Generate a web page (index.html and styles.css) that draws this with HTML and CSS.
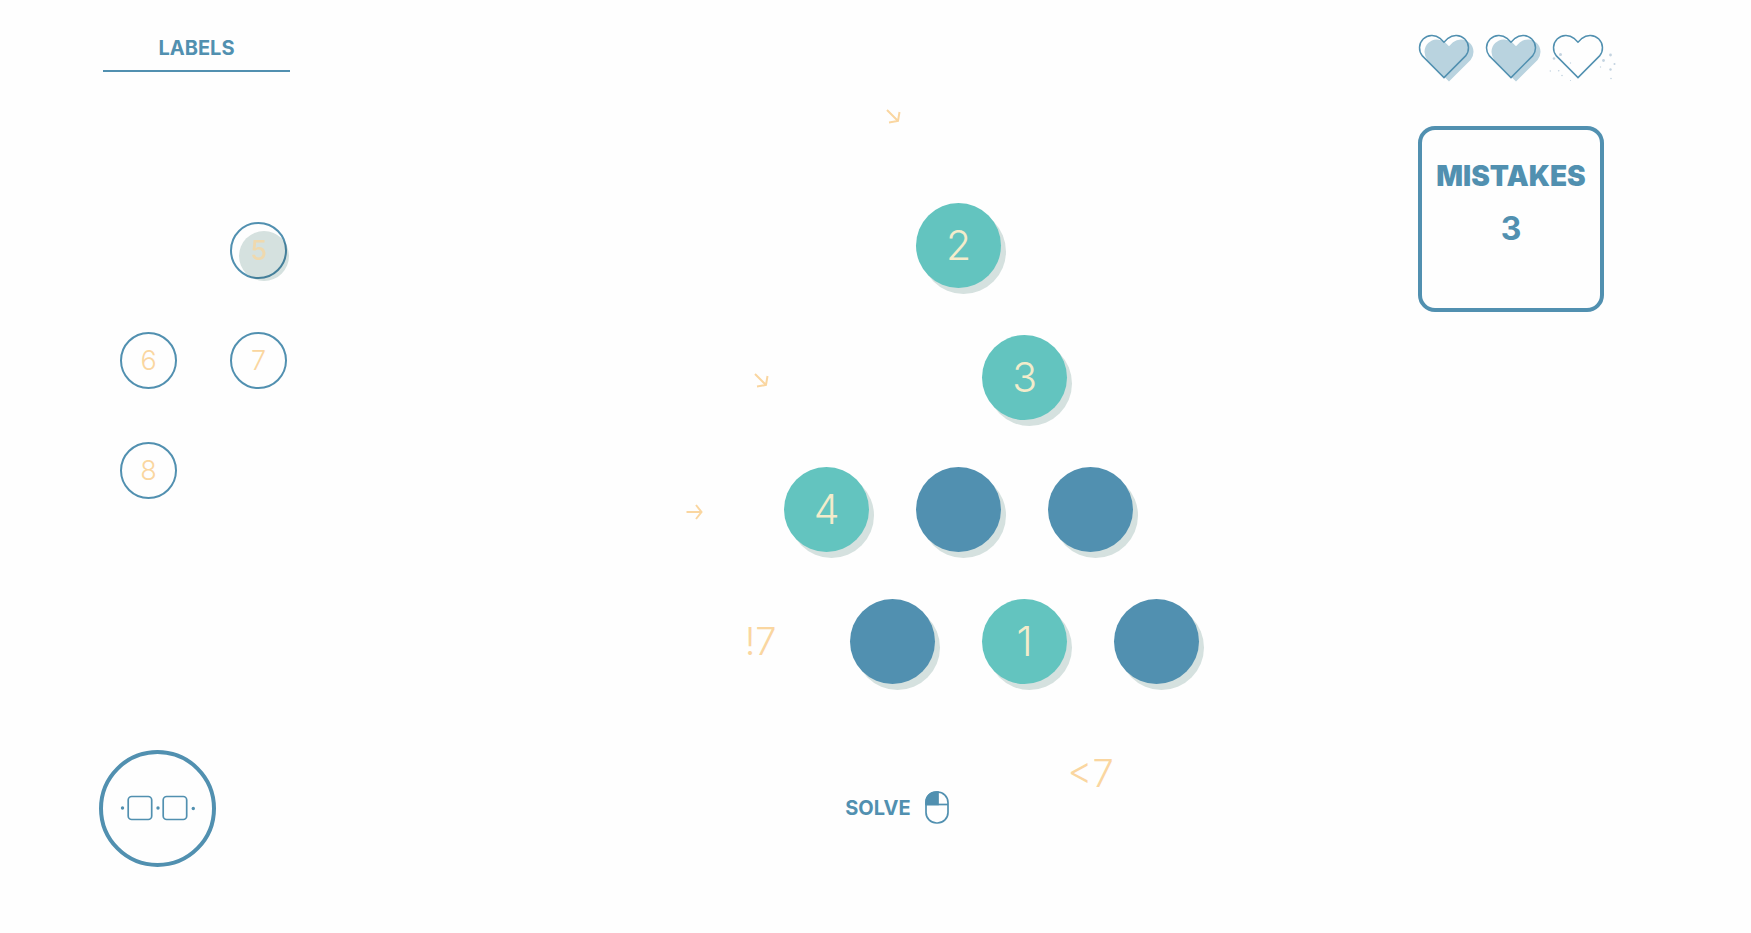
FILE: index.html
```html
<!DOCTYPE html>
<html lang="en">
<head>
<meta charset="utf-8">
<title>Labels puzzle</title>
<meta name="viewport" content="width=device-width, initial-scale=1">
<link rel="stylesheet" href="styles.css">
</head>
<body>
<svg class="defs" aria-hidden="true">
  <symbol id="heart" viewBox="0 0 60 52">
    <path d="M27 10.300L23 6.300A12.500 12.500 0 0 0 5.400 23.900L27 45.600L48.600 23.900A12.500 12.500 0 0 0 31 6.300Z"/>
  </symbol>
</svg>
<main class="game">
  <aside class="side">
    <h1 class="tab">LABELS</h1>
    <div class="labels">
      <button class="label label-active col-2" type="button">5</button>
      <button class="label" type="button">6</button>
      <button class="label" type="button">7</button>
      <button class="label" type="button">8</button>
    </div>
    <button class="tool" type="button" aria-label="Show links">
      <svg width="72" height="28" viewBox="0 0 72 28" fill="none" stroke="currentColor" stroke-width="1.700">
        <rect x="6.200" y="1.500" width="23.500" height="23" rx="3.500"/>
        <rect x="41.200" y="1.500" width="23.500" height="23" rx="3.500"/>
        <g fill="currentColor" stroke="none"><circle cx="0.500" cy="13" r="1.700"/><circle cx="36" cy="13" r="1.700"/><circle cx="71.300" cy="13.500" r="1.700"/></g>
      </svg>
    </button>
  </aside>

  <section class="board" aria-label="Board">
    <span class="hint r1 c4"><svg class="arrow" viewBox="0 0 18 18"><path d="M3 3L14 14M15.500 5L14 14L5 15.500"/></svg></span>
    <button class="node node-set r2 c5" type="button">2</button>
    <span class="hint r3 c2"><svg class="arrow" viewBox="0 0 18 18"><path d="M3 3L14 14M15.500 5L14 14L5 15.500"/></svg></span>
    <button class="node node-set r3 c6" type="button">3</button>
    <span class="hint r4 c1"><svg class="arrow" viewBox="0 0 18 18"><path d="M0.500 9H15.500M10 2L15.500 9L10 16"/></svg></span>
    <button class="node node-set r4 c3" type="button">4</button>
    <button class="node r4 c5" type="button" aria-label="Empty node"></button>
    <button class="node r4 c7" type="button" aria-label="Empty node"></button>
    <span class="hint r5 c2">!7</span>
    <button class="node r5 c4" type="button" aria-label="Empty node"></button>
    <button class="node node-set r5 c6" type="button">1</button>
    <button class="node r5 c8" type="button" aria-label="Empty node"></button>
    <span class="hint r6 c7">&lt;7</span>
    <button class="solve r6 c4" type="button">
      SOLVE
      <svg width="24" height="33" viewBox="0 0 24 33" fill="none" stroke="currentColor" stroke-width="1.700">
        <path d="M13 1H11C5.500 1 1 5.500 1 11V13.500H13Z" fill="currentColor"/>
        <rect x="1" y="1" width="22" height="31" rx="10.500"/>
        <path d="M1 13.500H23"/>
      </svg>
    </button>
  </section>

  <aside class="status">
    <div class="lives" role="img" aria-label="2 of 3 lives left">
      <svg class="life" viewBox="0 0 60 52"><use class="life-fill" href="#heart" x="5" y="4" width="60" height="52"/><use class="life-line" href="#heart" width="60" height="52"/></svg>
      <svg class="life" viewBox="0 0 60 52"><use class="life-fill" href="#heart" x="5" y="4" width="60" height="52"/><use class="life-line" href="#heart" width="60" height="52"/></svg>
      <svg class="life" viewBox="0 0 60 52"><use class="life-line" href="#heart" width="60" height="52"/>
        <g class="dust">
          <circle cx="3" cy="26.500" r="1.300"/><circle cx="9.500" cy="22.500" r="1.500"/><circle cx="52.500" cy="28.500" r="1.400"/><circle cx="59.500" cy="23" r="1.400"/><circle cx="63.500" cy="32" r="1"/><circle cx="59.500" cy="37.500" r="1.200"/>
          <circle cx="19.500" cy="31" r=".7"/><circle cx="-0.700" cy="39" r=".7"/><circle cx="7.700" cy="38.700" r=".8"/><circle cx="11" cy="43.500" r=".8"/><circle cx="19.500" cy="48.500" r=".6"/><circle cx="49.500" cy="35" r=".7"/><circle cx="60" cy="46.500" r=".8"/>
        </g>
      </svg>
    </div>
    <div class="card">
      <h2 class="card-title">MISTAKES</h2>
      <p class="card-value">3</p>
    </div>
  </aside>
</main>
</body>
</html>
```
FILE: styles.css
```css
:root {
  --blue: #5190b0;
  --teal: #63c4bf;
  --shade: #d5e1df;
  --sand: #fad6a0;
}

* { box-sizing: border-box; }

body {
  margin: 0;
  background: #fefefe;
  color: var(--blue);
  font-family: Inter, "Open Sans", sans-serif;
}

h1, h2, p { margin: 0; }

button {
  padding: 0;
  border: 0;
  background: none;
  color: inherit;
  font: inherit;
  cursor: pointer;
}

.defs {
  position: absolute;
  width: 0;
  height: 0;
}

.game {
  display: grid;
  grid-template-columns: 191px 338fr 594px 194fr 200px;
  min-height: 100vh;
  padding: 0 134px 0 99px;
}

.side {
  display: flex;
  flex-direction: column;
  padding: 33px 0 66px;
}

.tab {
  margin-left: 4px;
  padding-bottom: 7px;
  border-bottom: 2px solid var(--blue);
  font-size: 20px;
  font-weight: 700;
  line-height: 30px;
  text-align: center;
}

.labels {
  display: grid;
  grid-template-columns: 57px 57px;
  gap: 53px;
  margin: 150px 0 0 21px;
}

.label {
  position: relative;
  z-index: 0;
  height: 57px;
  border: 2px solid var(--blue);
  border-radius: 50%;
  color: var(--sand);
  font-size: 27px;
  font-weight: 300;
  line-height: 53px;
}

.label-active {
  color: #efd9ae;
  font-weight: 500;
}

.label-active::before {
  content: "";
  position: absolute;
  z-index: -1;
  inset: 7px -4px -4px 7px;
  border-radius: 50%;
  background: var(--shade);
  mix-blend-mode: multiply;
}

.col-2 { grid-column: 2; }

.tool {
  display: flex;
  align-items: center;
  justify-content: center;
  width: 117px;
  height: 117px;
  margin-top: auto;
  border: 4px solid var(--blue);
  border-radius: 50%;
}

.tool svg { overflow: visible; }

/* Staggered board: every cell spans two half-width columns. */
.board {
  grid-column: 3;
  display: grid;
  grid-template-columns: repeat(9, 66px);
  grid-template-rows: repeat(6, 132px);
  place-items: center;
  padding-top: 47px;
}

.c1 { grid-column: 1 / span 2; }
.c2 { grid-column: 2 / span 2; }
.c3 { grid-column: 3 / span 2; }
.c4 { grid-column: 4 / span 2; }
.c5 { grid-column: 5 / span 2; }
.c6 { grid-column: 6 / span 2; }
.c7 { grid-column: 7 / span 2; }
.c8 { grid-column: 8 / span 2; }
.r1 { grid-row: 1; }
.r2 { grid-row: 2; }
.r3 { grid-row: 3; }
.r4 { grid-row: 4; }
.r5 { grid-row: 5; }
.r6 { grid-row: 6; }

.node {
  width: 85px;
  height: 85px;
  border-radius: 50%;
  background: var(--blue);
  box-shadow: 5px 6px 0 var(--shade);
  font-size: 41px;
  font-weight: 300;
  line-height: 85px;
}

.node-set {
  background: var(--teal);
  color: #f3eccb;
}

.hint {
  color: var(--sand);
  font-size: 38px;
  font-weight: 300;
  line-height: 48px;
}

.arrow {
  display: block;
  width: 18px;
  height: 18px;
  margin-top: 6px;
  fill: none;
  stroke: var(--sand);
  stroke-width: 2;
}

.solve {
  display: flex;
  align-items: center;
  align-self: end;
  justify-self: end;
  gap: 14px;
  padding: 0 10px 15px 0;
  font-size: 20px;
  font-weight: 700;
}

.status {
  grid-column: 5;
  padding-top: 32px;
}

.lives {
  display: flex;
  gap: 7px;
}

.life {
  width: 60px;
  height: 52px;
  overflow: visible;
}

.life-fill { fill: #b9d3df; }

.life-line {
  fill: none;
  stroke: var(--blue);
  stroke-width: 1.5px;
}

.dust { fill: #c3d3e0; }

.card {
  width: 186px;
  min-height: 186px;
  margin: 42px 0 0 1px;
  padding-top: 28px;
  border: 4px solid var(--blue);
  border-radius: 17px;
  text-align: center;
}

.card-title {
  font-size: 28px;
  font-weight: 900;
  line-height: 36px;
}

.card-value {
  margin-top: 15px;
  font-size: 32px;
  font-weight: 700;
  line-height: 40px;
}
```
